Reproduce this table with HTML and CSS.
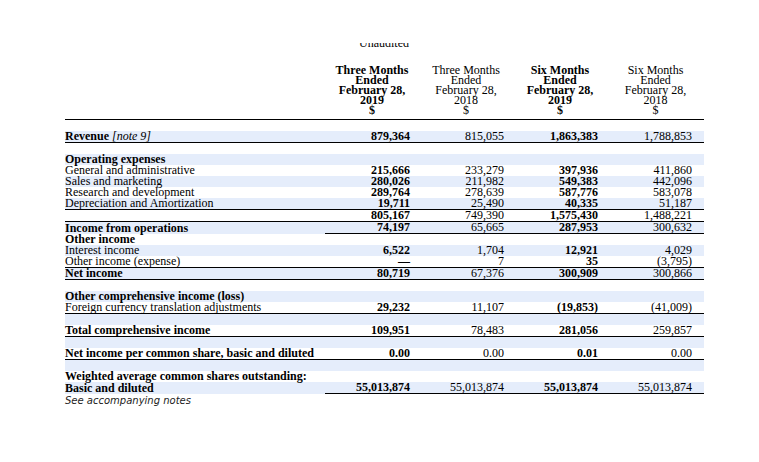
FILE: index.html
```html
<!DOCTYPE html>
<html>
<head>
<meta charset="utf-8">
<link rel="stylesheet" href="styles.css">
</head>
<body>
<div class="page">
  <div class="unaud"><span>Unaudited</span></div>
  <table class="fs">
    <colgroup>
      <col class="c-label"><col class="c-num"><col class="c-num"><col class="c-num"><col class="c-last">
    </colgroup>
    <thead>
      <tr>
        <th></th>
        <th class="b">Three Months<br>Ended<br>February 28,<br>2019<br>$</th>
        <th>Three Months<br>Ended<br>February 28,<br>2018<br>$</th>
        <th class="b">Six Months<br>Ended<br>February 28,<br>2019<br>$</th>
        <th>Six Months<br>Ended<br>February 28,<br>2018<br>$</th>
      </tr>
    </thead>
    <tbody>
      <tr class="sp"><td colspan="5"></td></tr>
      <tr class="alt rule"><td><span class="b">Revenue</span> <i>[note 9]</i></td><td class="n b">879,364</td><td class="n">815,055</td><td class="n b">1,863,383</td><td class="n">1,788,853</td></tr>
      <tr><td></td><td class="n"></td><td class="n"></td><td class="n"></td><td class="n"></td></tr>
      <tr class="alt"><td class="b">Operating expenses</td><td class="n"></td><td class="n"></td><td class="n"></td><td class="n"></td></tr>
      <tr><td>General and administrative</td><td class="n b">215,666</td><td class="n">233,279</td><td class="n b">397,936</td><td class="n">411,860</td></tr>
      <tr class="alt"><td>Sales and marketing</td><td class="n b">280,026</td><td class="n">211,982</td><td class="n b">549,383</td><td class="n">442,096</td></tr>
      <tr><td>Research and development</td><td class="n b">289,764</td><td class="n">278,639</td><td class="n b">587,776</td><td class="n">583,078</td></tr>
      <tr class="alt rule"><td>Depreciation and Amortization</td><td class="n b">19,711</td><td class="n">25,490</td><td class="n b">40,335</td><td class="n">51,187</td></tr>
      <tr class="rule"><td></td><td class="n b">805,167</td><td class="n">749,390</td><td class="n b">1,575,430</td><td class="n">1,488,221</td></tr>
      <tr class="alt nrule"><td class="b">Income from operations</td><td class="n b">74,197</td><td class="n">65,665</td><td class="n b">287,953</td><td class="n">300,632</td></tr>
      <tr><td class="b">Other income</td><td class="n"></td><td class="n"></td><td class="n"></td><td class="n"></td></tr>
      <tr class="alt"><td>Interest income</td><td class="n b">6,522</td><td class="n">1,704</td><td class="n b">12,921</td><td class="n">4,029</td></tr>
      <tr class="rule"><td>Other income (expense)</td><td class="n b">—</td><td class="n">7</td><td class="n b">35</td><td class="n">(3,795)</td></tr>
      <tr class="alt rule"><td class="b">Net income</td><td class="n b">80,719</td><td class="n">67,376</td><td class="n b">300,909</td><td class="n">300,866</td></tr>
      <tr><td></td><td class="n"></td><td class="n"></td><td class="n"></td><td class="n"></td></tr>
      <tr class="alt"><td class="b">Other comprehensive income (loss)</td><td class="n"></td><td class="n"></td><td class="n"></td><td class="n"></td></tr>
      <tr class="rule"><td>Foreign currency translation adjustments</td><td class="n b">29,232</td><td class="n">11,107</td><td class="n b">(19,853)</td><td class="n">(41,009)</td></tr>
      <tr class="alt"><td></td><td class="n"></td><td class="n"></td><td class="n"></td><td class="n"></td></tr>
      <tr class="rule"><td class="b">Total comprehensive income</td><td class="n b">109,951</td><td class="n">78,483</td><td class="n b">281,056</td><td class="n">259,857</td></tr>
      <tr class="alt"><td></td><td class="n"></td><td class="n"></td><td class="n"></td><td class="n"></td></tr>
      <tr class="rule"><td class="b">Net income per common share, basic and diluted</td><td class="n b">0.00</td><td class="n">0.00</td><td class="n b">0.01</td><td class="n">0.00</td></tr>
      <tr class="alt"><td></td><td class="n"></td><td class="n"></td><td class="n"></td><td class="n"></td></tr>
      <tr><td class="b">Weighted average common shares outstanding:</td><td class="n"></td><td class="n"></td><td class="n"></td><td class="n"></td></tr>
      <tr class="alt nrule"><td class="b">Basic and diluted</td><td class="n b">55,013,874</td><td class="n">55,013,874</td><td class="n b">55,013,874</td><td class="n">55,013,874</td></tr>
    </tbody>
  </table>
  <p class="notes">See accompanying notes</p>
</div>
</body>
</html>
```

FILE: styles.css
```css
body {
  margin: 0;
  background: #ffffff;
  color: #000000;
  font-family: "Liberation Serif", "Times New Roman", serif;
  font-size: 12px;
}

.page {
  padding: 43px 0 0 65px;
}

.unaud {
  height: 5px;
  width: 56px;
  margin-left: 294px;
  overflow: hidden;
}

.unaud span {
  display: block;
  line-height: 11px;
  margin-top: -5px;
}

.fs {
  border-collapse: separate;
  border-spacing: 0;
  table-layout: fixed;
  width: 639px;
  margin-top: 17px;
}

.c-label { width: 260px; }
.c-num { width: 94px; }
.c-last { width: 97px; }

.fs th {
  font-weight: normal;
  line-height: 10px;
  text-align: center;
  vertical-align: bottom;
  padding: 0 0 4px;
  border-bottom: 1px solid #000000;
}

.fs th.b,
.b {
  font-weight: bold;
}

.fs td {
  padding: 0;
  height: 11px;
  line-height: 11px;
  white-space: nowrap;
}

.fs td.n {
  text-align: right;
  padding-right: 9px;
}

.fs td.n:last-child {
  padding-right: 12px;
}

.fs tr.sp td {
  height: 11px;
}

.fs tr.alt td {
  background: #e5edfb;
}

.fs tr.rule td {
  border-bottom: 1px solid #000000;
}

.fs tr.nrule td.n {
  border-bottom: 1px solid #000000;
}

.notes {
  margin: 1px 0 0;
  font-family: "DejaVu Sans", Verdana, sans-serif;
  font-style: italic;
  font-size: 10px;
  line-height: 12px;
  color: #222222;
}
```
